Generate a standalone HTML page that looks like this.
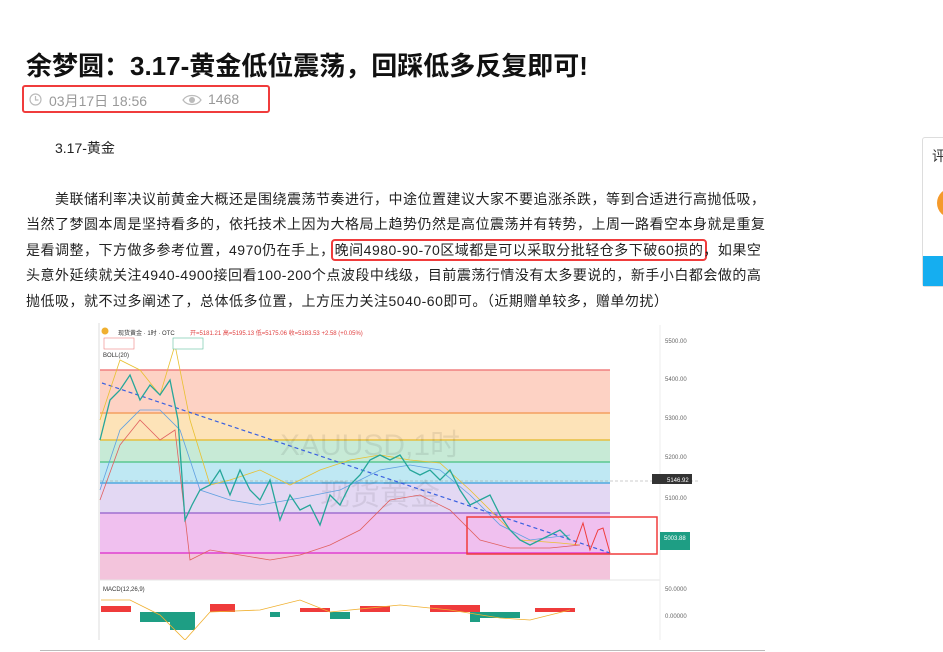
<!DOCTYPE html>
<html><head><meta charset="utf-8"><style>
body{margin:0;width:943px;height:652px;overflow:hidden;background:#fff;font-family:"Liberation Sans","Noto Sans CJK SC",sans-serif;color:#222;position:relative}
.t{position:absolute;left:26px;top:46px;font-size:26px;font-weight:bold;color:#111;white-space:nowrap;font-family:"Liberation Sans","Noto Sans CJK SC",sans-serif}
.meta{position:absolute;left:22px;top:85px;width:248px;height:28px;border:2px solid #f03c3c;border-radius:3px;box-sizing:border-box;font-size:14px;color:#999}
.meta span{position:absolute;top:4px}
.p{position:absolute;left:26px;font-size:14px;line-height:25.4px;white-space:nowrap;color:#222;letter-spacing:0.5px}
.hl{border:2px solid #f03c3c;border-radius:4px;padding:1px 2px;margin:0 -4px}
.side{position:absolute;left:922px;top:137px;width:30px;height:148px;border:1px solid #ddd;border-radius:3px;background:#fff}
</style></head><body>
<div class="t">余梦圆：3.17-黄金低位震荡，回踩低多反复即可!</div>
<div class="meta">
<svg style="position:absolute;left:5px;top:6px" width="13" height="13" viewBox="0 0 13 13"><circle cx="6.5" cy="6.5" r="5.5" fill="none" stroke="#bbb" stroke-width="1.2"/><path d="M6.5 3v4h3" fill="none" stroke="#bbb" stroke-width="1.2"/></svg>
<span style="left:25px">03月17日 18:56</span>
<svg style="position:absolute;left:158px;top:7px" width="20" height="12" viewBox="0 0 20 12"><path d="M1 6C5 0 15 0 19 6C15 12 5 12 1 6Z" fill="none" stroke="#bbb" stroke-width="1.2"/><circle cx="10" cy="6" r="3" fill="#bbb"/></svg>
<span style="left:184px">1468</span>
</div>
<div class="p" style="left:55px;top:136px;letter-spacing:0">3.17-黄金</div>
<div class="p" style="top:187px">
<div style="padding-left:29px">美联储利率决议前黄金大概还是围绕震荡节奏进行，中途位置建议大家不要追涨杀跌，等到合适进行高抛低吸，</div>
<div>当然了梦圆本周是坚持看多的，依托技术上因为大格局上趋势仍然是高位震荡并有转势，上周一路看空本身就是重复</div>
<div>是看调整，下方做多参考位置，4970仍在手上，<span class="hl">晚间4980-90-70区域都是可以采取分批轻仓多下破60损的</span>，如果空</div>
<div>头意外延续就关注4940-4900接回看100-200个点波段中线级，目前震荡行情没有太多要说的，新手小白都会做的高</div>
<div>抛低吸，就不过多阐述了，总体低多位置，上方压力关注5040-60即可。（近期赠单较多，赠单勿扰）</div>
</div>
<div class="side"><div style="position:absolute;left:9px;top:8px;font-size:14px;color:#333">评</div>
<div style="position:absolute;left:14px;top:50px;width:16px;height:30px;border-radius:15px 0 0 15px;background:#f59a2b"></div>
<div style="position:absolute;left:0;bottom:0;width:30px;height:30px;background:#15aef0"></div></div>
<svg style="position:absolute;left:98px;top:323px" width="605" height="317" viewBox="98 323 605 317">
<rect x="98" y="323" width="605" height="317" fill="#fff"/>
<line x1="99" y1="323" x2="99" y2="640" stroke="#ddd"/>
<rect x="100" y="370" width="510" height="43" fill="#fdd2c4"/>
<rect x="100" y="413" width="510" height="27" fill="#fde3b8"/>
<rect x="100" y="440" width="510" height="22" fill="#c7ead6"/>
<rect x="100" y="462" width="510" height="21" fill="#bfe8f3"/>
<rect x="100" y="483" width="510" height="30" fill="#e3d8f3"/>
<rect x="100" y="513" width="510" height="40" fill="#f0c0ef"/>
<rect x="100" y="553" width="510" height="27" fill="#f3c4dc"/>
<line x1="100" y1="370" x2="610" y2="370" stroke="#f08080" stroke-width="1.5"/>
<line x1="100" y1="413" x2="610" y2="413" stroke="#f4a060" stroke-width="1.5"/>
<line x1="100" y1="440" x2="610" y2="440" stroke="#e6c040" stroke-width="1.5"/>
<line x1="100" y1="462" x2="610" y2="462" stroke="#5cc890" stroke-width="1.5"/>
<line x1="100" y1="483" x2="610" y2="483" stroke="#50a8e0" stroke-width="1.5"/>
<line x1="100" y1="513" x2="610" y2="513" stroke="#a070d0" stroke-width="1.5"/>
<line x1="100" y1="553" x2="610" y2="553" stroke="#e040d0" stroke-width="1.5"/>
<line x1="100" y1="481" x2="700" y2="481" stroke="#999" stroke-dasharray="3,2" stroke-width="0.6"/>
<text x="280" y="455" font-size="30" fill="#000" fill-opacity="0.08" font-family="Liberation Sans,Noto Sans CJK SC,sans-serif">XAUUSD,1时</text>
<text x="320" y="505" font-size="30" fill="#000" fill-opacity="0.08" font-family="Liberation Sans,Noto Sans CJK SC,sans-serif">现货黄金</text>
<polyline fill="none" stroke="#3a60e0" stroke-width="1.2" stroke-dasharray="4,3" points="102,383 610,553"/>
<polyline fill="none" stroke="#e8c030" stroke-width="0.8" points="100,420 120,360 140,370 160,395 175,345 190,420 210,485 230,480 260,470 290,485 320,470 350,460 380,455 410,460 440,463 470,490 500,520 520,540 560,543 580,545"/>
<polyline fill="none" stroke="#e06060" stroke-width="0.8" points="100,500 120,445 140,420 160,440 175,430 190,560 210,550 240,555 270,560 300,555 330,545 360,530 390,500 420,495 450,510 480,540 510,548 550,548 580,545"/>
<polyline fill="none" stroke="#60a0e0" stroke-width="0.8" points="100,490 120,430 140,410 160,410 180,430 200,490 230,500 260,505 300,498 340,490 380,470 410,465 440,470 470,495 500,525 530,540 570,535"/>
<polyline fill="none" stroke="#26a69a" stroke-width="1.3" points="100,440 110,400 120,390 130,375 140,400 150,385 160,395 170,380 178,420 185,520 192,505 200,490 210,485 220,470 230,495 240,470 250,490 260,500 270,480 280,520 290,495 300,510 310,505 320,525 330,495 340,505 350,485 360,475 370,460 380,455 390,460 400,455 410,470 420,475 430,470 440,480 450,470 460,490 470,505 480,500 490,495 500,515 510,530 520,540 530,545 540,540 550,535 560,530 570,540"/>
<polyline fill="none" stroke="#f03c3c" stroke-width="1" points="575,545 583,523 590,550 598,530 603,528 610,553"/>
<rect x="467" y="517" width="190" height="37" fill="none" stroke="#f03c3c" stroke-width="1.5"/>
<line x1="100" y1="580" x2="660" y2="580" stroke="#e5e5e5"/>
<g fill="#ef3b3b"><rect x="101" y="606" width="30" height="6"/><rect x="210" y="604" width="25" height="8"/><rect x="300" y="608" width="30" height="4"/><rect x="360" y="606" width="30" height="6"/><rect x="430" y="605" width="50" height="7"/><rect x="535" y="608" width="40" height="4"/></g>
<g fill="#1e9e84"><rect x="140" y="612" width="30" height="10"/><rect x="170" y="612" width="25" height="18"/><rect x="270" y="612" width="10" height="5"/><rect x="330" y="612" width="20" height="7"/><rect x="480" y="612" width="40" height="6"/><rect x="470" y="612" width="10" height="10"/></g>
<polyline fill="none" stroke="#f0b030" stroke-width="0.8" points="101,600 130,600 160,615 185,640 210,612 260,610 300,600 330,612 400,605 450,610 500,618 530,620 570,610"/>
<line x1="660" y1="325" x2="660" y2="640" stroke="#eee"/>
<g font-size="6" fill="#666" font-family="Liberation Sans,sans-serif"><text x="665" y="343">5500.00</text><text x="665" y="381">5400.00</text><text x="665" y="420">5300.00</text><text x="665" y="459">5200.00</text><text x="665" y="500">5100.00</text><text x="665" y="591">50.0000</text><text x="665" y="618">0.00000</text>
<text x="118" y="335" fill="#333">现货黄金 · 1时 · OTC</text><text x="190" y="335" fill="#e04040">开=5181.21 高=5195.13 低=5175.06 收=5183.53 +2.58 (+0.05%)</text>
<text x="103" y="357" fill="#333">BOLL(20)</text><text x="103" y="591" fill="#333">MACD(12,26,9)</text></g>
<rect x="652" y="474" width="40" height="10" fill="#333"/><text x="667" y="482" font-size="6" fill="#fff">5146.92</text>
<rect x="660" y="532" width="30" height="18" fill="#1e9e84"/><text x="664" y="540" font-size="6" fill="#fff">5003.88</text>
<rect x="104" y="338" width="30" height="11" fill="#fff" stroke="#f08080" stroke-width="0.6"/><rect x="173" y="338" width="30" height="11" fill="#fff" stroke="#60c0a0" stroke-width="0.6"/>
<circle cx="105" cy="331" r="3.5" fill="#f0b030"/>
</svg>
<div style="position:absolute;left:40px;top:650px;width:725px;height:1px;background:#bbb"></div>
</body></html>
